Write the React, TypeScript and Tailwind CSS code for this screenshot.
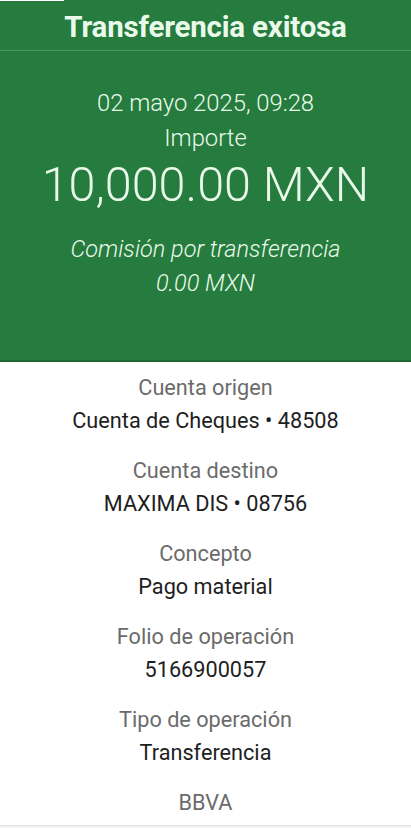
import React from "react";

const rows: [string, string][] = [
  ["Cuenta origen", "Cuenta de Cheques • 48508"],
  ["Cuenta destino", "MAXIMA DIS • 08756"],
  ["Concepto", "Pago material"],
  ["Folio de operación", "5166900057"],
  ["Tipo de operación", "Transferencia"],
];

export default function App() {
  return (
    <div className="w-[411px] h-[828px] bg-white flex flex-col overflow-hidden" style={{ fontFamily: "Roboto, 'Open Sans', sans-serif" }}>
      <div className="bg-[#267b3e] text-[#eafaea] flex flex-col items-center h-[362px] border-b-2 border-[#1f6a34]">
        <div className="w-full h-[1px] flex">
          <div className="w-[64px] bg-white" />
        </div>
        <div className="w-full h-[50px] pt-[4px] flex items-center justify-center border-b border-[#4d9560]">
          <span className="text-[29.5px] font-bold tracking-[-0.2px] leading-none">Transferencia exitosa</span>
        </div>
        <div className="mt-[38px] text-[23.8px] font-light leading-[28px]">02 mayo 2025, 09:28</div>
        <div className="mt-[7px] text-[23.8px] font-light leading-[28px]">Importe</div>
        <div className="mt-[5px] text-[48.5px] font-light leading-[56px]">10,000.00 MXN</div>
        <div className="mt-[22px] text-[23.5px] font-light italic leading-[28px]">Comisión por transferencia</div>
        <div className="mt-[6px] text-[23.5px] font-light italic leading-[28px]">0.00 MXN</div>
      </div>
      <div className="flex flex-col items-center pt-[12px]">
        {rows.map(([l, v]) => (
          <div key={l} className="flex flex-col items-center h-[83px]">
            <div className="text-[21.7px] text-[#6b6b6b] leading-[28px]">{l}</div>
            <div className="mt-[5px] text-[21.7px] text-[#1e1e1e] leading-[28px]">{v}</div>
          </div>
        ))}
        <div className="text-[21.7px] text-[#6b6b6b] leading-[28px]">BBVA</div>
      </div>
      <div className="mt-auto h-[3px] border-t border-[#e2e2e2] bg-[#f2f2f2]" />
    </div>
  );
}
